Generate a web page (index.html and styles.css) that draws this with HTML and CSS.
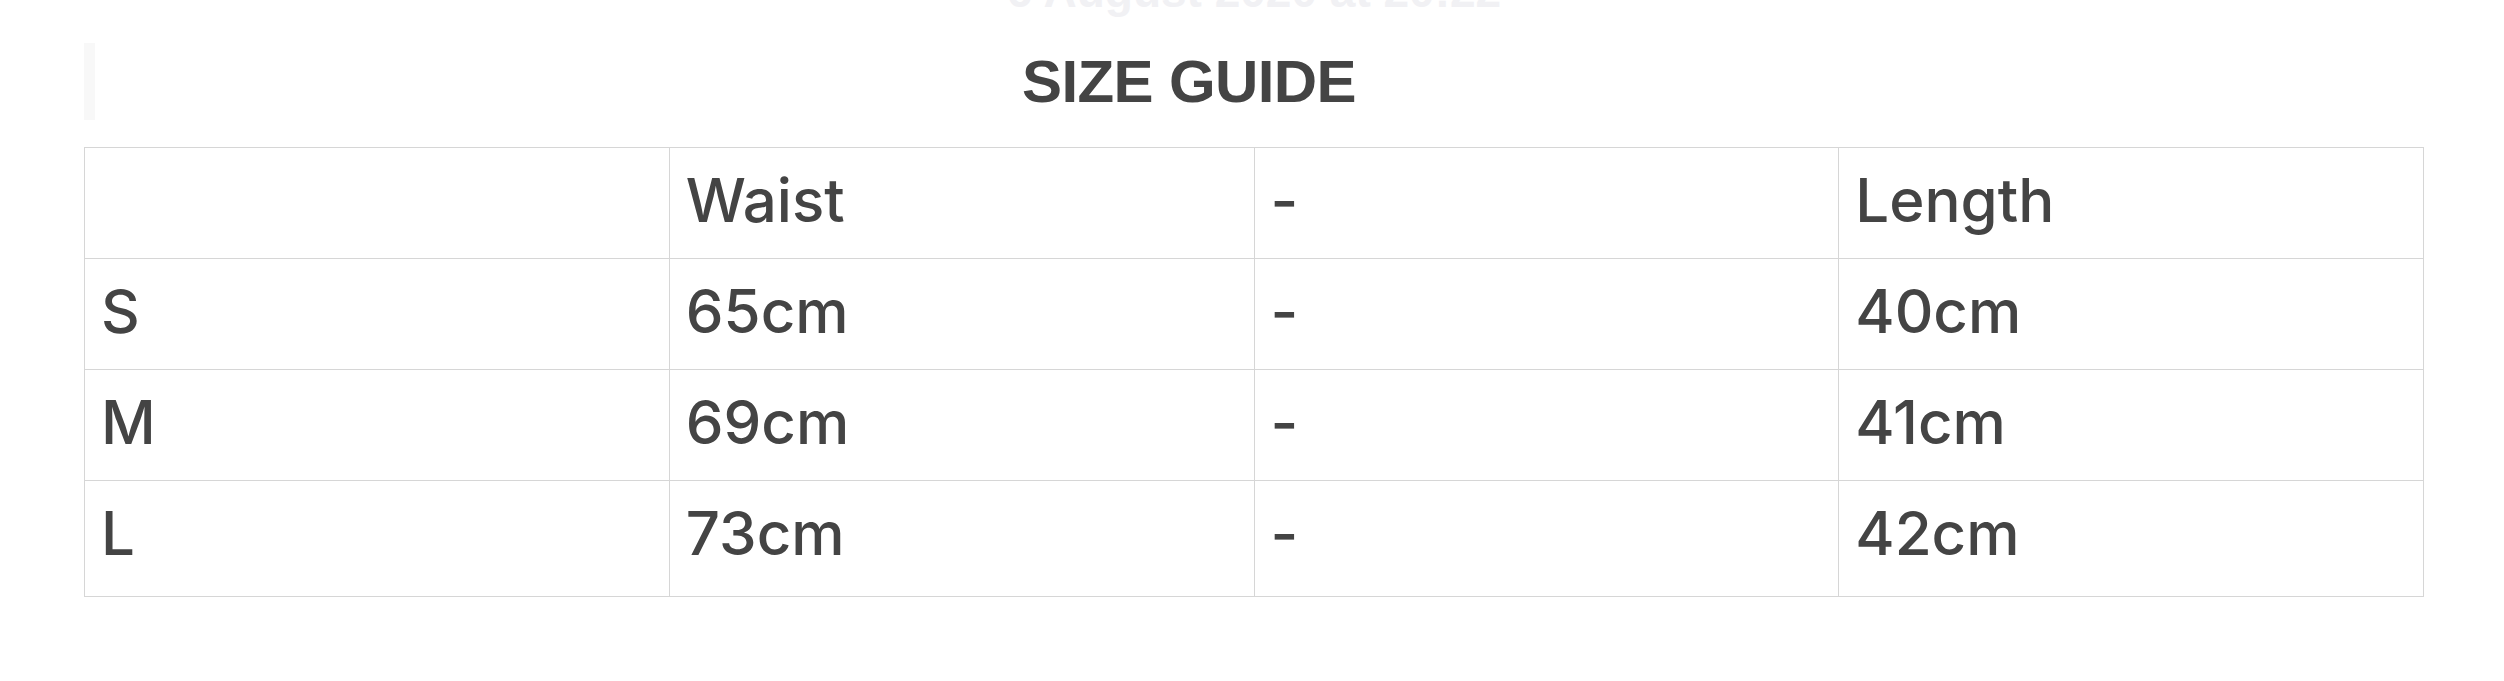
FILE: index.html
```html
<!DOCTYPE html>
<html lang="en">
<head>
<meta charset="utf-8">
<title>Size Guide</title>
<link rel="stylesheet" href="styles.css">
</head>
<body>
<div class="page">
  <div class="date">6 August 2020 at 20:22</div>
  <div class="header">
    <div class="bar"></div>
    <h2 class="title">SIZE GUIDE</h2>
  </div>
  <table class="sizes">
    <colgroup><col><col><col><col></colgroup>
    <tr><td></td><td>Waist</td><td>-</td><td>Length</td></tr>
    <tr><td>S</td><td>65cm</td><td>-</td><td>40cm</td></tr>
    <tr><td>M</td><td>69cm</td><td>-</td><td>41cm</td></tr>
    <tr class="last"><td>L</td><td>73cm</td><td>-</td><td>42cm</td></tr>
  </table>
</div>
</body>
</html>
```

FILE: styles.css
```css
html, body {
  margin: 0;
  padding: 0;
  background: #ffffff;
}

.page {
  padding: 0 80px 0 84px;
  color: #444444;
  overflow: hidden;
  height: 681px;
  box-sizing: border-box;
}

.date {
  font-family: "Liberation Sans", Arial, sans-serif;
  font-weight: 700;
  font-size: 46px;
  line-height: 46px;
  margin-top: -32px;
  text-align: center;
  color: #f1f1f4;
}

.header {
  display: flex;
  align-items: center;
  margin-top: 29px;
  height: 77px;
}

.bar {
  width: 11px;
  height: 77px;
  background: #f8f8f8;
  flex: none;
}

.title {
  flex: 1;
  margin: 0;
  padding-right: 141px;
  text-align: center;
  font-family: "Liberation Sans", Arial, sans-serif;
  font-weight: 700;
  font-size: 60px;
  line-height: 60px;
  letter-spacing: -0.6px;
  color: #444444;
}

.sizes {
  margin-top: 27px;
  width: 2340px;
  table-layout: fixed;
  border-collapse: collapse;
  font-family: Inter, "Liberation Sans", sans-serif;
  font-weight: 500;
  font-size: 60px;
  line-height: 90px;
  color: #444444;
}

.sizes col {
  width: 25%;
}

.sizes td {
  border: 1px solid #d6d6d6;
  padding: 7px 16px 13px;
  text-align: left;
  vertical-align: top;
}

.sizes tr.last td {
  padding-bottom: 18px;
}
```
